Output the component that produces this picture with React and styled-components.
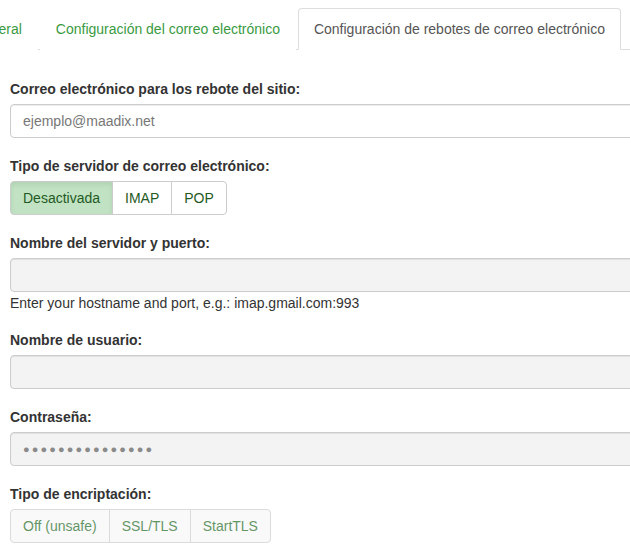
import React from "react";
import styled, { createGlobalStyle } from "styled-components";

const Global = createGlobalStyle`
  html, body { margin: 0; padding: 0; background: #fff; overflow: hidden; }
  body { font-family: "Liberation Sans", Arial, sans-serif; font-size: 14px; line-height: 20px; color: #333; }
  * { box-sizing: border-box; }
`;

const Page = styled.div`
  width: 700px;
`;

const TabBar = styled.ul`
  display: flex;
  list-style: none;
  margin: 0 0 0 -44px;
  padding: 8px 0 0 0;
  border-bottom: 1px solid #ddd;
`;

const Tab = styled.li`
  margin: 0 2px -1px 0;
  padding: 10px 15px;
  border: 1px solid ${(p) => (p.$active ? "#ddd" : "transparent")};
  border-bottom-color: ${(p) => (p.$active ? "#fff" : "transparent")};
  border-radius: 4px 4px 0 0;
  background: #fff;
  color: ${(p) => (p.$active ? "#555" : "#3a9a3f")};
  white-space: nowrap;
`;

const Content = styled.div`
  padding: 29px 0 0 10px;
  display: flex;
  flex-direction: column;
  gap: 18px;
`;

const Group = styled.div`
  display: flex;
  flex-direction: column;
`;

const Label = styled.label`
  font-weight: bold;
  margin-bottom: 5px;
`;

const Input = styled.input`
  display: block;
  width: 100%;
  height: 34px;
  padding: 6px 12px;
  font: inherit;
  color: #555;
  background: ${(p) => (p.disabled ? "#f3f3f3" : "#fff")};
  border: 1px solid #ccc;
  border-radius: 4px;
  box-shadow: inset 0 1px 1px rgba(0, 0, 0, 0.075);
  outline: none;
  &::placeholder { color: #777; }
`;

const Dots = styled.div`
  height: 34px;
  padding: 6px 12px;
  background: #f3f3f3;
  border: 1px solid #ccc;
  border-radius: 4px;
  box-shadow: inset 0 1px 1px rgba(0, 0, 0, 0.075);
  color: #8a8a8a;
  font-size: 11px;
  letter-spacing: 2.1px;
  line-height: 20px;
`;

const Help = styled.div`
  margin-top: 1px;
  margin-bottom: -1px;
  color: #333;
`;

const BtnGroup = styled.div`
  display: inline-flex;
  align-self: flex-start;
  opacity: ${(p) => (p.$disabled ? 0.7 : 1)};
`;

const Btn = styled.button`
  font: inherit;
  height: 34px;
  padding: 6px 12px;
  margin-left: -1px;
  border: 1px solid #ccc;
  background: ${(p) => (p.$active ? "#c1e3c3" : p.$muted ? "#f7f7f7" : "#fff")};
  color: ${(p) => (p.$muted ? "#1f6a25" : "#1f5a24")};
  box-shadow: ${(p) => (p.$active ? "inset 0 3px 5px rgba(0,0,0,0.08)" : "none")};
  cursor: pointer;
  &:first-child { margin-left: 0; border-radius: 4px 0 0 4px; }
  &:last-child { border-radius: 0 4px 4px 0; }
`;

export default function App() {
  return (
    <Page>
      <Global />
      <TabBar>
        <Tab>General</Tab>
        <Tab>Configuración del correo electrónico</Tab>
        <Tab $active>Configuración de rebotes de correo electrónico</Tab>
      </TabBar>
      <Content>
        <Group>
          <Label>Correo electrónico para los rebote del sitio:</Label>
          <Input placeholder="ejemplo@maadix.net" readOnly />
        </Group>
        <Group>
          <Label>Tipo de servidor de correo electrónico:</Label>
          <BtnGroup>
            <Btn $active>Desactivada</Btn>
            <Btn>IMAP</Btn>
            <Btn>POP</Btn>
          </BtnGroup>
        </Group>
        <Group>
          <Label>Nombre del servidor y puerto:</Label>
          <Input disabled />
          <Help>Enter your hostname and port, e.g.: imap.gmail.com:993</Help>
        </Group>
        <Group>
          <Label>Nombre de usuario:</Label>
          <Input disabled />
        </Group>
        <Group>
          <Label>Contraseña:</Label>
          <Dots>●●●●●●●●●●●●●●●</Dots>
        </Group>
        <Group>
          <Label>Tipo de encriptación:</Label>
          <BtnGroup $disabled>
            <Btn $muted>Off (unsafe)</Btn>
            <Btn $muted>SSL/TLS</Btn>
            <Btn $muted>StartTLS</Btn>
          </BtnGroup>
        </Group>
      </Content>
    </Page>
  );
}
